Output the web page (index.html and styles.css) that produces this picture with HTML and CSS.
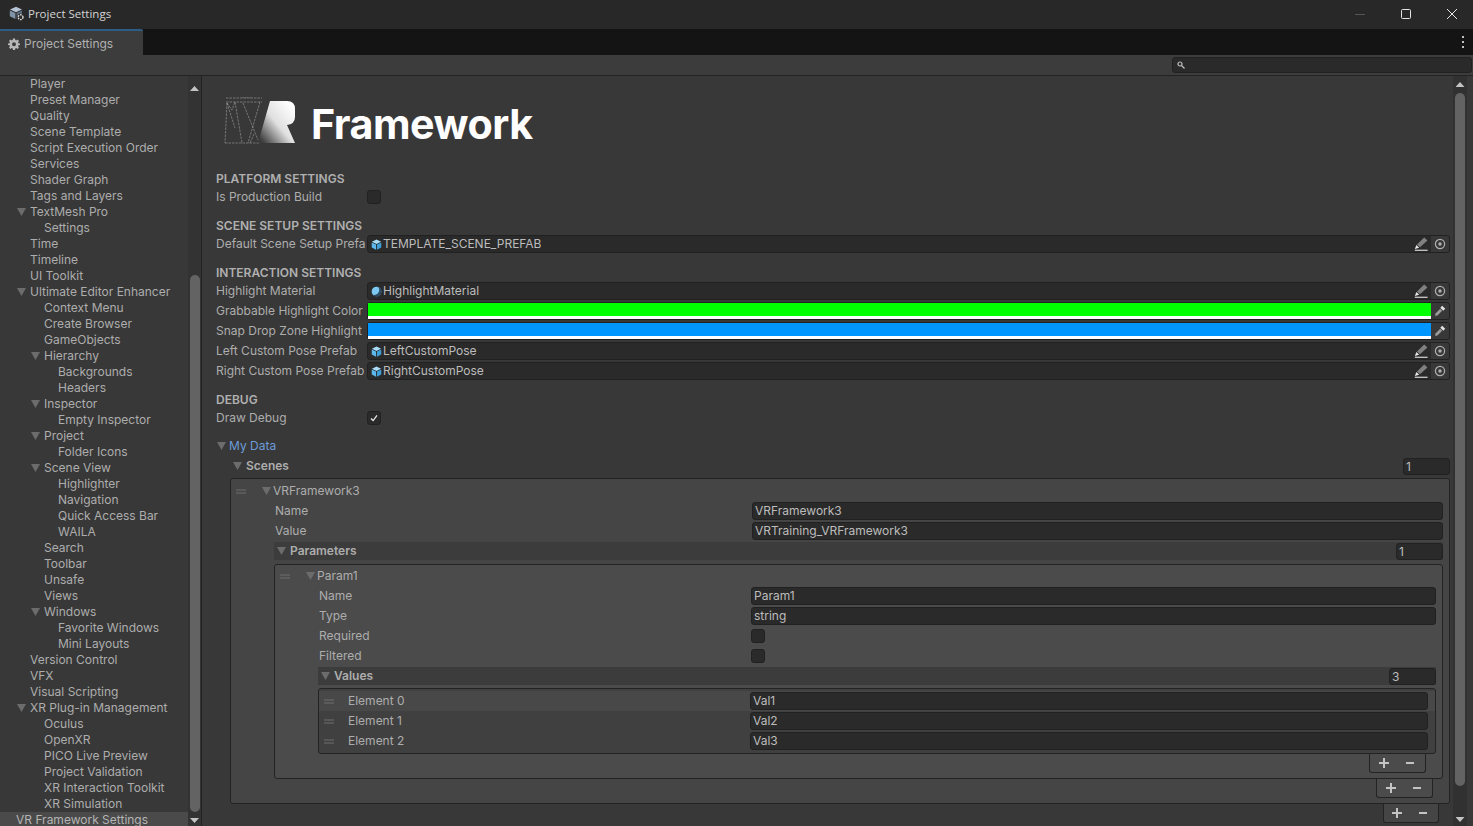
FILE: index.html
```html
<!DOCTYPE html>
<html lang="en">
<head>
<meta charset="utf-8">
<title>Project Settings</title>
<link rel="stylesheet" href="styles.css">
</head>
<body>
<svg class="defs" width="0" height="0">
  <defs>
    <symbol id="cube" viewBox="0 0 12 12">
      <path d="M6 .6 11 3 6 5.4 1 3Z" fill="#a8dcf8"/>
      <path d="M.8 3.8 5.5 6.100V11.600L.8 9.200Z" fill="#5cb8ec"/>
      <path d="M11.200 3.800 6.500 6.100V11.600L11.200 9.200Z" fill="#3d9ed8"/>
    </symbol>
    <symbol id="sphere" viewBox="0 0 12 12">
      <circle cx="6" cy="6" r="5.300" fill="#7cc8f0"/>
      <path d="M7.500 .9A5.300 5.300 0 0 1 6 11.300 5.300 5.300 0 0 1 2 9.500 5.500 5.500 0 0 0 8.500 6.500 5 5 0 0 0 7.500 .9Z" fill="#2c4a60"/>
    </symbol>
    <symbol id="pencil" viewBox="0 0 14 14">
      <path d="M10.200 .6 13.400 3.400 6 10.200 3 7.400Z" fill="#808080"/>
      <path d="M2.400 8 5.200 10.800 .8 12Z" fill="#e8e8e8"/>
      <path d="M.8 13.300h12.800" stroke="#c8c8c8" stroke-width="1.300"/>
    </symbol>
    <symbol id="target" viewBox="0 0 12 12">
      <circle cx="6" cy="6" r="4.600" fill="none" stroke="#b0b0b0" stroke-width="1.200"/>
      <circle cx="6" cy="6" r="1.700" fill="#b0b0b0"/>
    </symbol>
    <symbol id="dropper" viewBox="0 0 12 12">
      <path d="M8.200 .8 11.200 3.800 9.300 5.700 6.300 2.700Z" fill="#e4e4e4"/>
      <path d="M6.200 3.800 8.200 5.800 3.400 10.600 1.200 11 1.500 8.600Z" fill="#9a9a9a"/>
    </symbol>
    <symbol id="grip" viewBox="0 0 10 5">
      <path d="M0 1h10M0 4h10" stroke="#6e6e6e" stroke-width="1"/>
    </symbol>
    <symbol id="plusminus" viewBox="0 0 42 12">
      <path d="M1 6h10M6 1v10" stroke="#c4c4c4" stroke-width="2"/>
      <path d="M28 6h8" stroke="#c4c4c4" stroke-width="2"/>
    </symbol>
  </defs>
</svg>

<header class="titlebar">
  <svg class="appicon" viewBox="0 0 16 16" aria-hidden="true">
    <path d="M7 .8 13 3.400 7 6.200 1 3.400Z" fill="#b4c4d4"/>
    <path d="M.8 4.400 6.400 7V13L.8 10.200Z" fill="#7f93a8"/>
    <path d="M13 4.400 7.600 7V13L13 10.200Z" fill="#5f7388"/>
    <circle cx="11.600" cy="11.200" r="3.600" fill="#2a2a2a"/>
    <circle cx="11.600" cy="11.200" r="2.400" fill="none" stroke="#d8d8d8" stroke-width="1.400" stroke-dasharray="1.600 .8"/>
  </svg>
  <span class="apptitle">Project Settings</span>
  <span class="winbtns">
    <svg class="winbtn" viewBox="0 0 12 12"><path d="M1 6.500h10" stroke="#555" stroke-width="1"/></svg>
    <svg class="winbtn" viewBox="0 0 12 12"><rect x="1.500" y="1.500" width="9" height="9" rx="1" fill="none" stroke="#e6e6e6" stroke-width="1"/></svg>
    <svg class="winbtn" viewBox="0 0 12 12"><path d="M1 1l10 10M11 1 1 11" stroke="#e6e6e6" stroke-width="1"/></svg>
  </span>
</header>

<div class="tabstrip">
  <div class="tab">
    <svg class="gear" viewBox="0 0 24 24"><path fill="#b8b8b8" fill-rule="evenodd" d="M10 1h4l.6 3.200 1.900.8L19.200 3 22 5.800 20.100 8.500l.8 1.900L24 11v3l-3.100.6-.8 1.900 1.800 2.700L19.200 22l-2.700-1.900-1.900.8L14 24h-4l-.6-3.100-1.900-.8L4.800 22 2 19.200l1.900-2.700-.8-1.900L0 14v-3l3.100-.6.800-1.900L2 5.800 4.800 3l2.700 2 1.900-.8ZM12 8.500a4 4 0 1 0 0 8 4 4 0 0 0 0-8Z"/></svg>
    <span>Project Settings</span>
  </div>
  <svg class="kebab" viewBox="0 0 4 12"><path fill="#c0c0c0" d="M1 0h2v2H1zM1 5h2v2H1zM1 10h2v2H1z"/></svg>
</div>

<div class="toolbar">
  <div class="search">
    <svg class="searchicon" viewBox="0 0 8 8"><circle cx="3" cy="3" r="2" fill="none" stroke="#c0c0c0" stroke-width="1.200"/><path d="M4.500 4.500 7.500 7.500" stroke="#c0c0c0" stroke-width="1.200"/></svg>
  </div>
</div>

<div class="panes">
  <nav class="sidebar">
    <div class="navlist">
      <div class="nav l1 clip"><span>Player</span></div>
      <div class="nav l1">Preset Manager</div>
      <div class="nav l1">Quality</div>
      <div class="nav l1">Scene Template</div>
      <div class="nav l1">Script Execution Order</div>
      <div class="nav l1">Services</div>
      <div class="nav l1">Shader Graph</div>
      <div class="nav l1">Tags and Layers</div>
      <div class="nav l1"><i class="tri"></i>TextMesh Pro</div>
      <div class="nav l2">Settings</div>
      <div class="nav l1">Time</div>
      <div class="nav l1">Timeline</div>
      <div class="nav l1">UI Toolkit</div>
      <div class="nav l1"><i class="tri"></i>Ultimate Editor Enhancer</div>
      <div class="nav l2">Context Menu</div>
      <div class="nav l2">Create Browser</div>
      <div class="nav l2">GameObjects</div>
      <div class="nav l2"><i class="tri"></i>Hierarchy</div>
      <div class="nav l3">Backgrounds</div>
      <div class="nav l3">Headers</div>
      <div class="nav l2"><i class="tri"></i>Inspector</div>
      <div class="nav l3">Empty Inspector</div>
      <div class="nav l2"><i class="tri"></i>Project</div>
      <div class="nav l3">Folder Icons</div>
      <div class="nav l2"><i class="tri"></i>Scene View</div>
      <div class="nav l3">Highlighter</div>
      <div class="nav l3">Navigation</div>
      <div class="nav l3">Quick Access Bar</div>
      <div class="nav l3">WAILA</div>
      <div class="nav l2">Search</div>
      <div class="nav l2">Toolbar</div>
      <div class="nav l2">Unsafe</div>
      <div class="nav l2">Views</div>
      <div class="nav l2"><i class="tri"></i>Windows</div>
      <div class="nav l3">Favorite Windows</div>
      <div class="nav l3">Mini Layouts</div>
      <div class="nav l1">Version Control</div>
      <div class="nav l1">VFX</div>
      <div class="nav l1">Visual Scripting</div>
      <div class="nav l1"><i class="tri"></i>XR Plug-in Management</div>
      <div class="nav l2">Oculus</div>
      <div class="nav l2">OpenXR</div>
      <div class="nav l2">PICO Live Preview</div>
      <div class="nav l2">Project Validation</div>
      <div class="nav l2">XR Interaction Toolkit</div>
      <div class="nav l2">XR Simulation</div>
      <div class="nav l0 selected">VR Framework Settings</div>
    </div>
    <div class="vscroll side">
      <i class="arrow up"></i>
      <div class="thumb"></div>
      <i class="arrow down"></i>
    </div>
  </nav>

  <main class="content">
    <div class="logo">
      <svg class="logomark" viewBox="0 -1 74 48" aria-hidden="true">
        <defs>
          <linearGradient id="rgrad" x1="0.95" y1="0.15" x2="0.1" y2="0.95">
            <stop offset="0" stop-color="#ffffff"/>
            <stop offset="0.5" stop-color="#e0e0e0"/>
            <stop offset="1" stop-color="#3c3c3c"/>
          </linearGradient>
        </defs>
        <g fill="none" stroke="#a0a0a0" stroke-width=".6" stroke-dasharray="2.500 1">
          <path d="M2 0H38M2 4H38M18 -1H28M11 4 18 45M36 4 24 45M19 5 34 42M3 5 11 30M3 5 1 45M1 45H36M3 5 8 12 11 4M30 36 26 45"/>
        </g>
        <path d="M46 3H63Q71 3 71 11V19Q71 26 63 27L71 45H34Z" fill="url(#rgrad)"/>
      </svg>
      <span class="wordmark">Framework</span>
    </div>

    <h2 class="sect first">PLATFORM SETTINGS</h2>
    <div class="row"><label class="lbl">Is Production Build</label><i class="check"></i></div>

    <h2 class="sect">SCENE SETUP SETTINGS</h2>
    <div class="row"><label class="lbl">Default Scene Setup Prefab</label>
      <div class="field obj"><svg class="ic"><use href="#cube"/></svg><span class="val">TEMPLATE_SCENE_PREFAB</span><svg class="pen"><use href="#pencil"/></svg><span class="pick"><svg class="tg"><use href="#target"/></svg></span></div>
    </div>

    <h2 class="sect">INTERACTION SETTINGS</h2>
    <div class="row"><label class="lbl">Highlight Material</label>
      <div class="field obj"><svg class="ic"><use href="#sphere"/></svg><span class="val">HighlightMaterial</span><svg class="pen"><use href="#pencil"/></svg><span class="pick"><svg class="tg"><use href="#target"/></svg></span></div>
    </div>
    <div class="row"><label class="lbl">Grabbable Highlight Color</label>
      <div class="field color"><span class="swatch green"></span><span class="pick"><svg class="tg"><use href="#dropper"/></svg></span></div>
    </div>
    <div class="row"><label class="lbl">Snap Drop Zone Highlight</label>
      <div class="field color"><span class="swatch blue"></span><span class="pick"><svg class="tg"><use href="#dropper"/></svg></span></div>
    </div>
    <div class="row"><label class="lbl">Left Custom Pose Prefab</label>
      <div class="field obj"><svg class="ic"><use href="#cube"/></svg><span class="val">LeftCustomPose</span><svg class="pen"><use href="#pencil"/></svg><span class="pick"><svg class="tg"><use href="#target"/></svg></span></div>
    </div>
    <div class="row"><label class="lbl">Right Custom Pose Prefab</label>
      <div class="field obj"><svg class="ic"><use href="#cube"/></svg><span class="val">RightCustomPose</span><svg class="pen"><use href="#pencil"/></svg><span class="pick"><svg class="tg"><use href="#target"/></svg></span></div>
    </div>

    <h2 class="sect">DEBUG</h2>
    <div class="row"><label class="lbl">Draw Debug</label>
      <i class="check"><svg viewBox="0 0 14 14"><path d="M3.500 7.500 6 10 10.500 4" fill="none" stroke="#e8e8e8" stroke-width="1.500"/></svg></i>
    </div>

    <div class="row mydata"><i class="tri"></i><span class="link">My Data</span></div>

    <div class="nest">
      <div class="row arrayhead"><i class="tri"></i><b>Scenes</b><span class="count">1</span></div>
      <div class="box scenebox">
        <div class="row itemhead"><svg class="grip"><use href="#grip"/></svg><i class="tri"></i><span>VRFramework3</span></div>
        <div class="row"><label class="lbl sc">Name</label><div class="field"><span class="val">VRFramework3</span></div></div>
        <div class="row"><label class="lbl sc">Value</label><div class="field"><span class="val">VRTraining_VRFramework3</span></div></div>
        <div class="row arrayhead band"><i class="tri"></i><b>Parameters</b><span class="count">1</span></div>

        <div class="box parambox">
          <div class="row itemhead"><svg class="grip"><use href="#grip"/></svg><i class="tri"></i><span>Param1</span></div>
          <div class="row"><label class="lbl pa">Name</label><div class="field"><span class="val">Param1</span></div></div>
          <div class="row"><label class="lbl pa">Type</label><div class="field"><span class="val">string</span></div></div>
          <div class="row"><label class="lbl pa">Required</label><i class="check"></i></div>
          <div class="row"><label class="lbl pa">Filtered</label><i class="check"></i></div>
          <div class="row arrayhead band"><i class="tri"></i><b>Values</b><span class="count">3</span></div>

          <div class="box listbox">
            <div class="row element odd"><svg class="grip"><use href="#grip"/></svg><label class="lbl el">Element 0</label><div class="field"><span class="val">Val1</span></div></div>
            <div class="row element"><svg class="grip"><use href="#grip"/></svg><label class="lbl el">Element 1</label><div class="field"><span class="val">Val2</span></div></div>
            <div class="row element"><svg class="grip"><use href="#grip"/></svg><label class="lbl el">Element 2</label><div class="field"><span class="val">Val3</span></div></div>
          </div>
          <div class="footer"><svg class="pm"><use href="#plusminus"/></svg></div>
        </div>
        <div class="footer"><svg class="pm"><use href="#plusminus"/></svg></div>
      </div>
      <div class="footer"><svg class="pm"><use href="#plusminus"/></svg></div>
    </div>
  </main>

  <div class="vscroll mainbar">
    <i class="arrow up"></i>
    <div class="thumb"></div>
    <i class="arrow down"></i>
  </div>
</div>
</body>
</html>
```
FILE: styles.css
```css
* { box-sizing: border-box; }
html, body { margin: 0; height: 826px; overflow: hidden; }
body {
  display: flex;
  flex-direction: column;
  background: #383838;
  color: #adadad;
  font: 12px/16px Inter, "Liberation Sans", sans-serif;
}
.defs { position: absolute; }

.titlebar {
  flex: 0 0 29px;
  display: flex;
  align-items: center;
  padding: 0 0 2px 9px;
  background: #282828;
  color: #d4d4d4;
}
.appicon { width: 16px; height: 16px; margin-right: 3px; }
.apptitle { font: 11.5px/16px "Open Sans", sans-serif; }
.winbtns { margin-left: auto; display: flex; margin-right: 15px; gap: 34px; }
.winbtn { width: 12px; height: 12px; }

.tabstrip {
  flex: 0 0 26px;
  display: flex;
  align-items: stretch;
  justify-content: space-between;
  background: #141414;
}
.tab {
  width: 143px;
  display: flex;
  align-items: center;
  gap: 4px;
  padding: 1px 0 0 8px;
  background: #3c3c3c;
  border-top: 2px solid #2c5d87;
  border-top-right-radius: 2px;
  color: #b0b0b0;
}
.gear { width: 12px; height: 12px; }
.kebab { width: 4px; height: 12px; align-self: center; margin-right: 8px; }

.toolbar {
  flex: 0 0 21px;
  display: flex;
  justify-content: flex-end;
  padding: 2px 1px 0 0;
  background: #3c3c3c;
  border-bottom: 1px solid #232323;
}
.search {
  width: 300px;
  height: 16px;
  display: flex;
  align-items: center;
  padding-left: 4px;
  background: #2a2a2a;
  border: 1px solid #212121;
  border-radius: 3px;
}
.searchicon { width: 8px; height: 8px; }

.panes { flex: 1; min-height: 0; display: flex; }

.sidebar {
  width: 202px;
  display: flex;
  border-right: 1px solid #232323;
  overflow: hidden;
}
.navlist { flex: 0 0 188px; min-width: 0; }
.nav { height: 16px; line-height: 16px; white-space: nowrap; display: flex; align-items: center; }
.l0 { padding-left: 16px; }
.l1 { padding-left: 30px; }
.l2 { padding-left: 44px; }
.l3 { padding-left: 58px; }
.clip { height: 13px; margin-top: 3px; overflow: hidden; align-items: flex-start; }
.clip span { display: block; margin-top: -3px; }
.selected { background: #4a4a4a; color: #b4b4b4; }

.tri {
  flex: none;
  width: 9px;
  height: 8px;
  background: #6c6c6c;
  clip-path: polygon(0 0, 100% 0, 50% 100%);
}
.nav .tri { margin-left: -13px; margin-right: 4px; }

.vscroll { display: flex; flex-direction: column; align-items: center; }
.side { flex: 0 0 13px; background: #333; }
.side .arrow.up { margin-top: 10px; }
.side .thumb { width: 10px; height: 537px; margin-top: 184px; }
.side .arrow.down { margin-top: 6px; }
.mainbar { flex: 0 0 14px; margin-right: 6px; background: #313131; }
.mainbar .arrow.up { margin-top: 6px; }
.mainbar .thumb { width: 10px; height: 693px; margin-top: 6px; }
.mainbar .arrow.down { margin-top: 31px; }
.thumb { background: #636363; border-radius: 5px; flex: none; }
.arrow { flex: none; width: 9px; height: 5px; background: #c4c4c4; }
.arrow.up { clip-path: polygon(50% 0, 100% 100%, 0 100%); }
.arrow.down { clip-path: polygon(0 0, 100% 0, 50% 100%); }

.content {
  flex: 1;
  min-width: 0;
  overflow: hidden;
  padding: 0 3px 0 14px;
}

.logo { height: 94px; display: flex; align-items: center; margin-left: 8px; }
.logomark { width: 74px; height: 48px; flex: none; align-self: flex-start; margin-top: 21px; }
.wordmark {
  margin: 2px 0 0 13px;
  color: #fff;
  font: 700 41.200px/48px Inter, sans-serif;
  letter-spacing: -.5px;
}

.sect {
  margin: 11px 0 0;
  height: 18px;
  font-size: 12px;
  line-height: 18px;
  font-weight: 600;
  color: #b0b0b0;
}
.sect.first { margin-top: 0; }

.row { height: 18px; margin-bottom: 2px; display: flex; align-items: center; white-space: nowrap; }
.lbl { flex: none; width: 150px; margin-right: 1px; overflow: hidden; }

.check {
  flex: none;
  width: 14px;
  height: 14px;
  background: #2a2a2a;
  border: 1px solid #212121;
  border-radius: 3px;
  display: block;
}
.check svg { display: block; width: 12px; height: 12px; }

.field {
  flex: 1;
  min-width: 0;
  height: 18px;
  display: flex;
  align-items: center;
  background: #2a2a2a;
  border: 1px solid #212121;
  border-radius: 3px;
  padding-left: 2px;
  color: #bcbcbc;
}
.field.obj { padding-left: 3px; }
.val { overflow: hidden; }
.ic { width: 11px; height: 11px; flex: none; margin-right: 1px; }
.pen { width: 14px; height: 14px; flex: none; margin-left: auto; margin-right: 3px; }
.pick {
  flex: none;
  width: 18px;
  height: 16px;
  display: flex;
  align-items: center;
  justify-content: center;
  background: #383838;
  border-radius: 0 2px 2px 0;
}
.tg { width: 12px; height: 12px; }
.field.color { padding-left: 0; }
.swatch { flex: 1; height: 16px; border-bottom: 3px solid #fff; }
.green { background: #00ff00; }
.blue { background: #0096ff; }

.mydata { margin-top: 10px; }
.mydata .tri { margin-left: 1px; margin-right: 3px; }
.link { color: #6c9bd6; }

.nest { margin-left: 14px; }
.arrayhead b { font-weight: 600; }
.arrayhead .tri { margin-left: 2px; margin-right: 4px; }
.nest > .arrayhead .tri { margin-left: 3px; }
.arrayhead .count {
  margin-left: auto;
  width: 47px;
  height: 17px;
  line-height: 15px;
  padding-left: 2px;
  background: #2a2a2a;
  border: 1px solid #212121;
  border-radius: 3px;
  color: #bcbcbc;
}
.band { background: #3c3c3c; margin-left: -1px; padding-left: 1px; }

.box { border: 1px solid #232323; border-radius: 3px; }
.scenebox { margin-top: 3px; padding: 3px 6px 5px 44px; background: #454545; }
.parambox { margin: 4px 0 0 -1px; padding: 2px 6px 5px 44px; background: #4b4b4b; }
.listbox { margin: 3px 0 0 -1px; padding: 3px 0 1px; background: #404040; }

.itemhead { margin-left: -39px; }
.itemhead .grip { margin-right: 16px; }
.itemhead .tri { margin-right: 2px; }
.grip { width: 10px; height: 5px; flex: none; }
.lbl.sc { width: 477px; margin-right: 0; }
.lbl.pa { width: 432px; margin-right: 0; }
.lbl.el { width: 402px; margin-right: 0; }

.element { padding-right: 7px; }
.element .grip { margin-left: 5px; margin-right: 14px; }
.element.odd { background: #484848; height: 20px; margin-top: -1px; margin-bottom: 1px; }

.footer {
  width: 57px;
  height: 19px;
  margin-left: auto;
  margin-right: 10px;
  padding-left: 2px;
  display: flex;
  align-items: center;
  justify-content: center;
  border: 1px solid #232323;
  border-top: 0;
  border-radius: 0 0 3px 3px;
}
.pm { width: 42px; height: 12px; flex: none; }
.nest > .footer { background: #454545; margin-right: 11px; width: 56px; }
.scenebox > .footer { background: #4b4b4b; }
.parambox > .footer { background: #4b4b4b; }
```
